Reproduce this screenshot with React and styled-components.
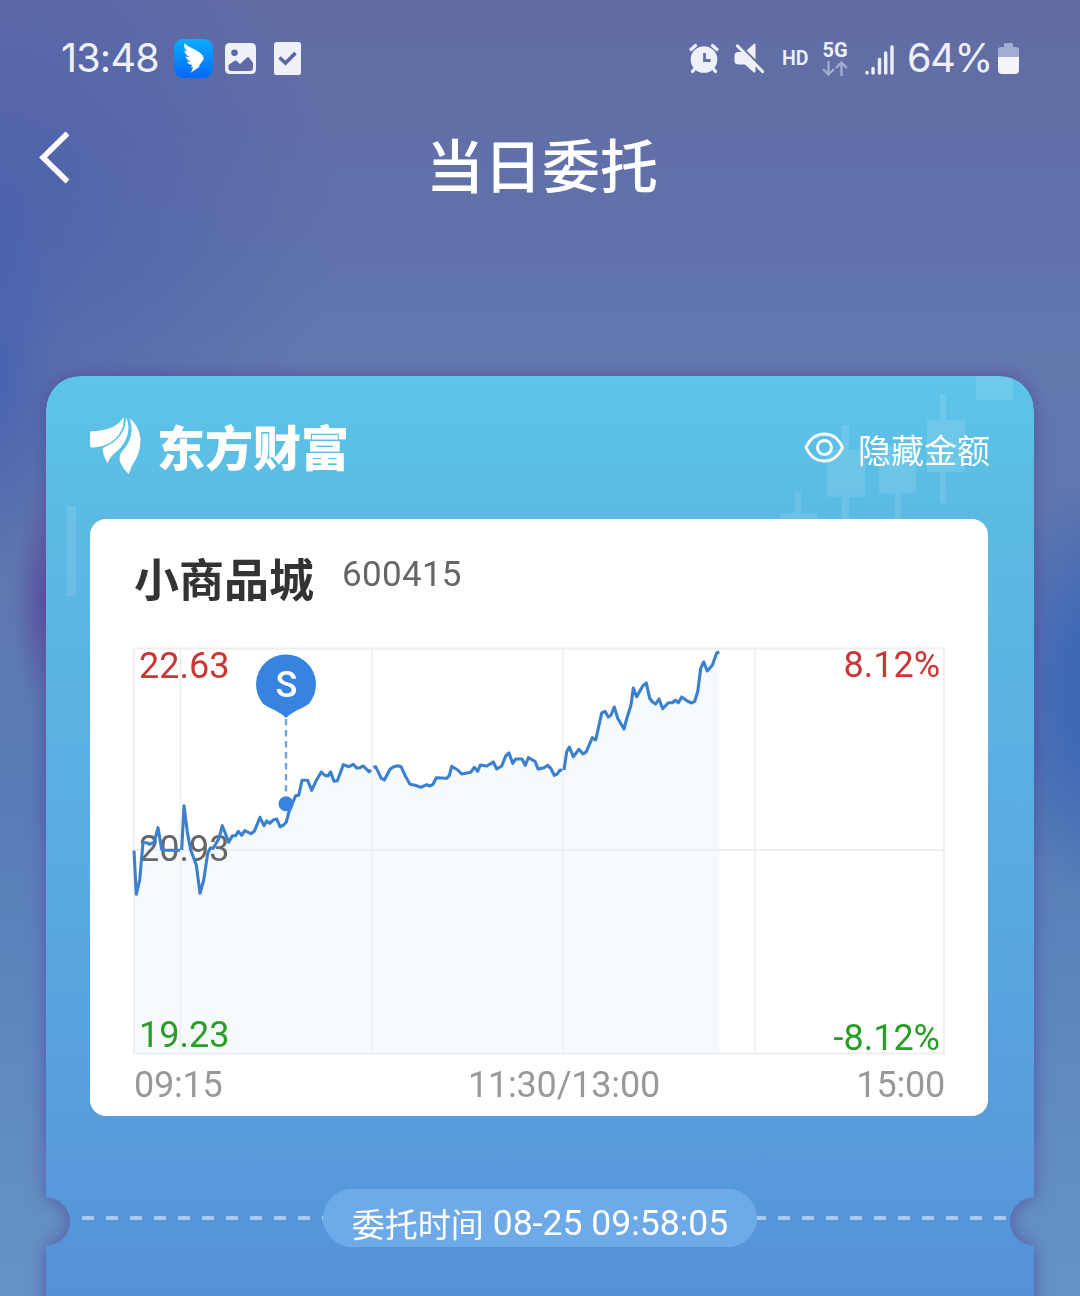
import React from 'react'
import styled, { createGlobalStyle } from 'styled-components'

// intraday price lines, one per trading session, in chart pixels
const sessions = [
  [[0, 202.7], [2.3, 246.3], [5.7, 232], [9, 194.7], [13, 194.7], [15.7, 196.3], [20.3, 194], [24, 179.7], [27.7, 201.3], [29.7, 202.3], [46, 202.3]],
  [
    [47.7, 202], [50, 157.7], [53.3, 183.7], [56.7, 202], [62.3, 217], [66, 245.3], [69.7, 232], [73.7, 205.3], [76.3, 200], [79.3, 200.3],
    [85, 190.3], [88.3, 177.7], [92, 187], [94.7, 194.3], [98.3, 187.7], [101.7, 187.7], [104.3, 183.3], [107.7, 187.3], [110.7, 182.7], [117, 185.7],
    [120.3, 183.3], [126, 169.3], [130, 177.7], [132.7, 173], [135.7, 175.3], [139.3, 172], [142.7, 171], [146, 178.7], [149.3, 177.3], [152.3, 174],
    [155, 163.7], [157.7, 157], [161.7, 147.7], [164.7, 147.3], [168, 132.3], [173.7, 132.3], [177.7, 142.3], [182, 133], [187.3, 124], [190.3, 127],
    [193.7, 128], [196.7, 124], [200, 133.3], [203.3, 132.7], [209.3, 116.7], [215, 118.7], [219.3, 116.3], [222.7, 120], [226, 119.7], [229.3, 118],
    [235, 123.7], [237, 122],
  ],
  [
    [239.3, 119.3], [241.7, 118.7], [247.3, 130.3], [250.3, 132], [256, 121.3], [259.3, 119], [263.7, 117.7], [267, 118.7], [272, 129.3], [276, 136.3],
    [281, 137.3], [287, 139.3], [292.7, 136.7], [296, 138], [299, 136.3], [302.3, 129.7], [312.7, 130.3], [315.3, 127.7], [317.7, 118.3], [323.7, 122],
    [327.7, 126], [336.7, 124.3], [340.3, 119.3], [343.7, 123.3], [346.3, 117], [352.7, 118], [359.3, 114], [362.7, 121], [367.7, 118], [371.7, 108],
    [375, 105], [378.7, 115.3], [381.7, 111], [388, 111], [391.3, 117.3], [394.3, 109.7], [401, 113.3], [404, 121], [410, 119.7], [413.7, 117.3],
    [417, 120.7], [420.3, 127.3], [423.3, 126], [426, 122], [428.3, 122.3],
  ],
  [
    [430, 122], [432.7, 103.7], [435.3, 99], [439.3, 108.7], [445, 101.3], [449, 106], [452.3, 103.7], [458.3, 89.7], [461.7, 92], [467.7, 65],
    [471, 63.3], [474.3, 69], [477, 67.3], [480.3, 59], [483.7, 70.3], [490, 81], [493.3, 68.7], [497, 57], [499.3, 40], [502.7, 48.7],
    [508.7, 38], [512.3, 35], [515.7, 50.3], [518.3, 53.7], [521.7, 56], [525, 51], [528.7, 60.7], [534.3, 54.7], [538.3, 54.7], [541.3, 52.3],
    [544.3, 54.7], [547.7, 49], [553.7, 53.3], [557.7, 55], [560.7, 53.3], [563.7, 43.7], [566.7, 20.3], [569.7, 14], [573.3, 23], [578.3, 17.3],
    [582.7, 5], [585.3, 4],
  ],
]

const toPath = (points) => 'M' + points.map((p) => p.join(' ')).join(' L')
const areaPath = toPath(sessions.flat()) + ' L585.3 405 L0 405 Z'

const PriceChart = () => (
  <ChartSvg width="830" height="425" viewBox="-10 -10 830 425">
    <path d={areaPath} fill="#f6fafd" />
    <g fill="none" stroke="#efefef" strokeWidth="2">
      <rect x="0" y="0.5" width="810" height="405" />
      <path d="M0 202H810" />
      <path d="M46.5 0V405M238 0V405M429 0V405M621 0V405" strokeWidth="1.6" />
    </g>
    <ChartLabel x="5" y="30" fill="#cb3536">22.63</ChartLabel>
    <ChartLabel x="5" y="213" fill="#666">20.93</ChartLabel>
    <ChartLabel x="5" y="399" fill="#289e26">19.23</ChartLabel>
    <ChartLabel x="806" y="29" fill="#cb3536" textAnchor="end">8.12%</ChartLabel>
    <ChartLabel x="806" y="402" fill="#289e26" textAnchor="end">-8.12%</ChartLabel>
    {sessions.map((points, index) => (
      <path key={index} d={toPath(points)} fill="none" stroke="#3b80cf" strokeWidth="3.1" strokeLinejoin="round" />
    ))}
    {/* sell marker */}
    <path d="M152 71V148" stroke="#6fa4dc" strokeWidth="2.4" strokeDasharray="6.5 4.5" />
    <circle cx="152" cy="155.7" r="7.5" fill="#3882e0" />
    <path d="M152 70C145 62.500 136 61 129 55.700A30 30 0 1 1 175 55.700C168 61 159 62.500 152 70Z" fill="#3882e0" />
    <MarkerLabel x="152.500" y="48.500" fill="#fff" textAnchor="middle">S</MarkerLabel>
  </ChartSvg>
)

const BackIcon = () => (
  <svg width="34" height="54" viewBox="0 0 34 54" fill="none" stroke="#fff" strokeWidth="5.500">
    <path d="M29.500 2.500L5 26.500L29.500 50.500" />
  </svg>
)

const WingIcon = () => (
  <svg width="39" height="39" viewBox="0 0 39 39">
    <defs>
      <linearGradient id="wing" x1="0" y1="0" x2="0" y2="1">
        <stop offset="0" stopColor="#08aefc" />
        <stop offset="1" stopColor="#0668fb" />
      </linearGradient>
    </defs>
    <rect width="39" height="39" rx="9" fill="url(#wing)" />
    <path d="M10.300 4.300C14 8 20 9.500 25 13Q30 16.500 29.700 20.300L24.500 27.500H26L16.700 33.700L19.300 28.300H16.700L18.500 26Q15 26 13 22.700L17 22.800Q12.500 21 11.500 17.500L15.500 18Q11 15.500 10.300 11.500L13.500 12.500Q9.500 9 10.300 4.300Z" fill="#fff" />
  </svg>
)

const PictureIcon = () => (
  <svg width="31" height="31" viewBox="0 0 31 31">
    <path fillRule="evenodd" fill="#eff1fa" d="M5 0H26Q31 0 31 5V26Q31 31 26 31H5Q0 31 0 26V5Q0 0 5 0ZM9.500 6.500A3.300 3.300 0 1 0 9.500 13.100A3.300 3.300 0 1 0 9.500 6.500ZM3.500 22V25Q3.500 28 6.500 28H25Q28 28 28 25V20L24 14.500Q23 13.300 22 14.500L15 21L11.500 17.800Q10.500 17 9.500 17.800Z" />
  </svg>
)

const TaskIcon = () => (
  <svg width="27" height="33" viewBox="0 0 27 33">
    <rect width="27" height="33" rx="2.500" fill="#eff1fa" />
    <path d="M5.500 15.500L11.500 21L21.500 11" fill="none" stroke="#59659f" strokeWidth="3.600" />
  </svg>
)

const AlarmIcon = () => (
  <svg width="30" height="31" viewBox="0 0 30 31">
    <g stroke="#eff1fa" strokeWidth="3.200" strokeLinecap="round">
      <path d="M2 6.500L6.500 2.500M28 6.500L23.500 2.500M6.500 25L3.500 28.500M23.500 25L26.500 28.500" />
    </g>
    <circle cx="15" cy="16.500" r="13.300" fill="#eff1fa" />
    <path d="M15.500 10V17.500H21.500" fill="none" stroke="#606fa6" strokeWidth="2.800" />
  </svg>
)

const MuteIcon = () => (
  <svg width="31" height="31" viewBox="0 0 31 31">
    <path d="M12 8L20 .8Q21.500 0 21.500 1.500V17Z" fill="#eff1fa" />
    <path d="M4.500 1.500L29.500 26.500" stroke="#606fa6" strokeWidth="3" />
    <path d="M3.500 3L28.500 28.500" stroke="#eff1fa" strokeWidth="3.200" strokeLinecap="round" />
    <path d="M.5 13Q.5 9 4 9H9L21.500 21.500V28.500Q21 30.300 19.500 29.300L11 21.500H5Q.5 21.500 .5 18Z" fill="#eff1fa" />
  </svg>
)

const DataArrows = () => (
  <svg width="26" height="15" viewBox="0 0 26 15" fill="none" stroke="#a2abd0" strokeWidth="2.400">
    <path d="M6.500 0V13M1 8L6.500 13.500L12 8M19.500 15V2M14 7L19.500 1.500L25 7" />
  </svg>
)

const SignalIcon = () => (
  <svg width="29" height="30" viewBox="0 0 29 30" stroke="#eff1fa" strokeWidth="3.400" strokeLinecap="round">
    <path d="M2 27.500V28M8 23.500V28M14.500 14.500V28M20.700 8V28M27 2V28" />
  </svg>
)

const BatteryIcon = () => (
  <svg width="21" height="31" viewBox="0 0 21 31">
    <path d="M7 0H14Q15 0 15 2V4H18Q21 4 21 7V14H0V7Q0 4 3 4H6V2Q6 0 7 0Z" fill="#a3acd1" />
    <path d="M0 14H21V27Q21 31 17 31H4Q0 31 0 27Z" fill="#f4f5fb" />
  </svg>
)

const EastLogo = () => (
  <svg width="52" height="58" viewBox="0 0 52 58" fill="#fff">
    <path d="M33.500 .3C28 9 20 13.500 0 14.500Q-1.500 21 .7 30.500C10 30.500 17 28 22.500 24C30 18.500 34.500 10 33.500 .3Z" />
    <path d="M36 .3C36 12 30.500 20 22.500 26Q17 29 12.700 31Q12.500 38 17.700 46.500Q19 41 25 36C36.500 27 42 13 36 .3Z" />
    <path d="M39.300 1C45 15 39.500 26.500 32 34.500Q28.500 39 30 45Q33 52 38.700 57Q41 49 46 42Q50.800 33 50.500 21.300Q48.500 8 39.300 1Z" />
  </svg>
)

const EyeIcon = () => (
  <svg width="40" height="32" viewBox="0 0 40 32" fill="none" stroke="#fff" strokeWidth="2.800" strokeLinejoin="round">
    <path d="M2 15.500C6 6.500 12 2 20.500 2S34.500 6.500 38.500 15.500C34.500 24.500 29 29 20.500 29S6 24.500 2 15.500Z" />
    <circle cx="20.500" cy="15.500" r="7" />
  </svg>
)

// pale candlesticks behind the card header
const Candles = () => (
  <CandlesSvg width="988" height="240" viewBox="0 0 988 240" fill="#fff" fillOpacity="0.11">
    <path d="M930 0H967V24H930Z" />
    <path d="M894 18H900V44H919V96H900V127H894V96H881V44H894Z" />
    <path d="M796 49H803V74H819V121H803V150H796V121H781V74H796Z" />
    <path d="M833 70H870V117H855V150H849V117H833Z" />
    <path d="M749 116H755V137H771V150H734V137H749Z" />
    <path d="M21 130H30V220H21Z" />
  </CandlesSvg>
)

const App = () => (
  <Page>
    <GlobalStyle />
    <StatusBar>
      <StatusLeft>
        <Clock>13:48</Clock>
        <WingIcon />
        <PictureIcon />
        <TaskIcon />
      </StatusLeft>
      <StatusRight>
        <AlarmIcon />
        <MuteIcon />
        <HdMark>HD</HdMark>
        <Network>
          <NetworkName>5G</NetworkName>
          <DataArrows />
        </Network>
        <SignalIcon />
        <BatteryLevel>64%</BatteryLevel>
        <BatteryIcon />
      </StatusRight>
    </StatusBar>
    <TitleBar>
      <BackButton><BackIcon /></BackButton>
      <Title>当日委托</Title>
    </TitleBar>
    <CardShadow>
      <Card>
        <Candles />
        <CardHeader>
          <Brand>
            <EastLogo />
            <BrandName>东方财富</BrandName>
          </Brand>
          <HideAmount>
            <EyeIcon />
            <HideAmountText>隐藏金额</HideAmountText>
          </HideAmount>
        </CardHeader>
        <Panel>
          <StockRow>
            <StockName>小商品城</StockName>
            <StockCode>600415</StockCode>
          </StockRow>
          <PriceChart />
          <TimeAxis>
            <TimeLabel>09:15</TimeLabel>
            <TimeLabel>11:30/13:00</TimeLabel>
            <TimeLabel align="right">15:00</TimeLabel>
          </TimeAxis>
        </Panel>
        <TicketLine>
          <OrderTime>
            <OrderTimeLabel>委托时间</OrderTimeLabel>
            <OrderTimeValue>08-25 09:58:05</OrderTimeValue>
          </OrderTime>
        </TicketLine>
      </Card>
    </CardShadow>
  </Page>
)

const GlobalStyle = createGlobalStyle`
  * {
    box-sizing: border-box;
  }
  body {
    margin: 0;
    font-family: Roboto, "Noto Sans CJK SC", sans-serif;
  }
  svg {
    display: block;
    flex-shrink: 0;
  }
`

const Page = styled.div`
  width: 1080px;
  height: 1296px;
  overflow: hidden;
  background:
    radial-gradient(ellipse 90px 210px at 1090px 690px, #4068b5 30%, rgba(64, 104, 181, 0) 100%),
    radial-gradient(ellipse 30px 110px at 42px 600px, rgba(92, 76, 156, 0.75) 0%, rgba(92, 76, 156, 0) 100%),
    radial-gradient(ellipse 60px 200px at 0 380px, rgba(68, 98, 176, 0.8) 0%, rgba(68, 98, 176, 0) 100%),
    radial-gradient(ellipse 360px 330px at -20px 210px, rgba(74, 94, 172, 0.85) 0%, rgba(74, 94, 172, 0) 100%),
    linear-gradient(180deg, #626ca4 0, #616fa7 130px, #6074ab 260px, #6279ae 370px, #6077ae 520px, #587cb6 800px, #608ac0 1080px, #6593c5 1296px);
`

const StatusBar = styled.div`
  display: flex;
  justify-content: space-between;
  height: 116px;
  padding: 0 61px;
`

const StatusLeft = styled.div`
  display: flex;
  align-items: center;
  height: 116px;

  > svg:nth-of-type(1) {
    margin-left: 14px;
  }
  > svg:nth-of-type(2) {
    margin-left: 12px;
  }
  > svg:nth-of-type(3) {
    margin-left: 18px;
  }
`

const Clock = styled.div`
  width: 99px;
  color: #eff1fa;
  font-family: Inter, sans-serif;
  font-size: 39.5px;
  letter-spacing: -0.8px;
  white-space: nowrap;
`

const StatusRight = styled.div`
  display: flex;
  align-items: center;
  height: 116px;
  color: #eff1fa;

  > svg:nth-of-type(2) {
    margin-left: 15px;
  }
  > svg:nth-of-type(3) {
    margin: 3px 0 0 16px;
  }
  > svg:nth-of-type(4) {
    margin-left: 8px;
  }
`

const HdMark = styled.div`
  width: 27px;
  margin-left: 17px;
  font-size: 19.5px;
  font-weight: 600;
`

const Network = styled.div`
  display: flex;
  flex-direction: column;
  align-items: center;
  width: 28px;
  margin-left: 12px;
`

const NetworkName = styled.div`
  height: 21px;
  font-size: 20px;
  font-weight: 700;
  line-height: 20px;
`

const BatteryLevel = styled.div`
  width: 83px;
  margin-left: 13px;
  font-family: Inter, sans-serif;
  font-size: 39.5px;
  letter-spacing: -1.3px;
  white-space: nowrap;
`

const TitleBar = styled.div`
  display: grid;
  grid-template-columns: 100px 1fr 96px;
  height: 260px;
`

const BackButton = styled.div`
  padding: 15px 0 0 38px;
`

const Title = styled.div`
  padding-top: 2px;
  color: #fff;
  font-size: 58px;
  font-weight: 500;
  line-height: 100px;
  text-align: center;
`

const CardShadow = styled.div`
  width: 988px;
  margin-left: 46px;
  filter: drop-shadow(0 0 9px rgba(82, 62, 150, 0.7));
`

// ticket card, a half circle is cut out of both sides
const Card = styled.div`
  position: relative;
  height: 960px;
  padding: 0 44px;
  border-radius: 34px 34px 0 0;
  background: linear-gradient(180deg, #5cc5e8 0, #5bbbe4 130px, #5ab1e2 360px, #589fdc 720px, #5591d9 920px);
  mask:
    radial-gradient(circle at 0 845.5px, transparent 23.5px, #000 24.5px) left / 50% 100% no-repeat,
    radial-gradient(circle at 100% 845.5px, transparent 23.5px, #000 24.5px) right / 50% 100% no-repeat;
`

const CandlesSvg = styled.svg`
  position: absolute;
  top: 0;
  left: 0;
`

const CardHeader = styled.div`
  position: relative;
  display: flex;
  justify-content: space-between;
  height: 143px;
`

const Brand = styled.div`
  display: flex;
  padding-top: 41px;
`

const BrandName = styled.div`
  margin-left: 15px;
  color: #fff;
  font-family: "Noto Sans CJK SC", sans-serif;
  font-size: 48px;
  font-weight: 900;
  line-height: 56px;
`

const HideAmount = styled.div`
  display: flex;
  align-items: center;
  gap: 14px;
  height: 40px;
  margin-top: 52px;
  color: #fff;
`

const HideAmountText = styled.div`
  padding-top: 8px;
  font-size: 33px;
  line-height: 40px;
`

const Panel = styled.div`
  position: relative;
  width: 898px;
  height: 597px;
  padding: 0 44px;
  border-radius: 16px;
  background-color: #fff;
`

const StockRow = styled.div`
  display: flex;
  height: 119px;
  padding-top: 30px;
`

const StockName = styled.div`
  padding-top: 3px;
  color: #333;
  font-size: 45px;
  font-weight: 600;
  line-height: 60px;
`

const StockCode = styled.div`
  margin-left: 28px;
  color: #666;
  font-size: 35px;
  letter-spacing: 0.3px;
  line-height: 51px;
`

const ChartSvg = styled.svg`
  margin-left: -10px;
`

const ChartLabel = styled.text`
  font-family: Roboto, sans-serif;
  font-size: 36px;
`

const MarkerLabel = styled.text`
  font-family: Roboto, sans-serif;
  font-size: 36px;
  font-weight: 500;
`

// the middle label sits under the midday grid line, not in the centre
const TimeAxis = styled.div`
  display: grid;
  grid-template-columns: 334px 192px 285px;
  width: 811px;
  color: #999;
  font-size: 36px;
  line-height: 44px;
`

const TimeLabel = styled.div`
  letter-spacing: -0.2px;
  text-align: ${({ align }) => align || 'left'};
  white-space: nowrap;
`

const TicketLine = styled.div`
  display: flex;
  justify-content: center;
  height: 58px;
  margin: 73px -16px 0 -8px;
  padding-right: 8px;
  background: repeating-linear-gradient(90deg, #a9cbf0 0 12px, transparent 12px 24px) 0 27px / 100% 4px no-repeat;
`

const OrderTime = styled.div`
  display: flex;
  align-items: center;
  justify-content: center;
  gap: 9px;
  width: 434px;
  height: 58px;
  padding-top: 9px;
  border-radius: 29px;
  background-color: #6eaae7;
  color: #fff;
  white-space: nowrap;
`

const OrderTimeLabel = styled.span`
  font-size: 33px;
`

const OrderTimeValue = styled.span`
  padding-top: 1px;
  font-size: 35.5px;
`

export default App
